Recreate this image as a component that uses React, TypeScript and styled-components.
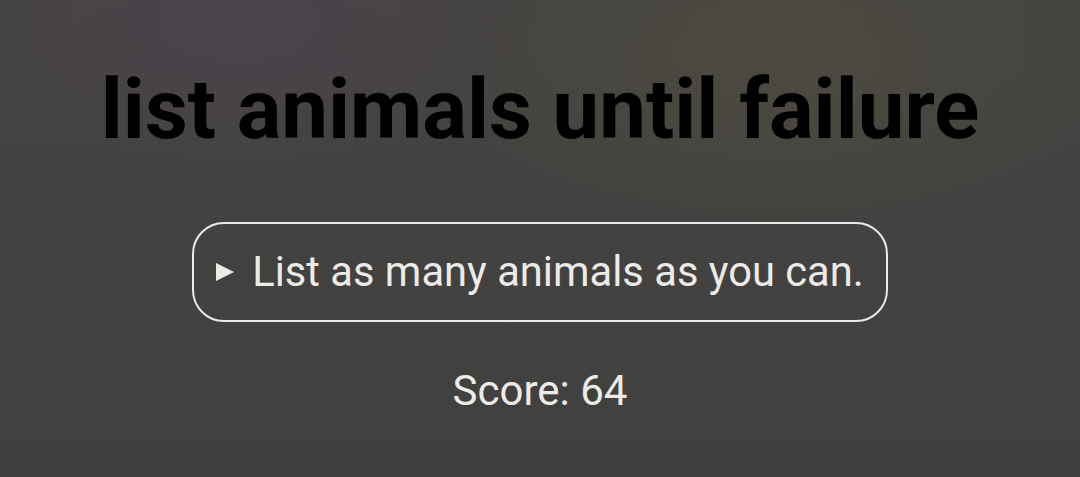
import React from "react";
import styled, { createGlobalStyle } from "styled-components";

const GlobalStyle = createGlobalStyle`
  html, body {
    margin: 0;
    padding: 0;
    height: 100%;
  }
  body {
    font-family: Roboto, "Liberation Sans", sans-serif;
    background: #424140;
  }
`;

const Page = styled.main`
  width: 100%;
  height: 477px;
  overflow: hidden;
  display: flex;
  flex-direction: column;
  align-items: center;
  background:
    radial-gradient(ellipse 40% 45% at 22% 5%, rgba(80, 66, 84, 0.55), transparent 70%),
    radial-gradient(ellipse 45% 50% at 72% 12%, rgba(82, 78, 62, 0.6), transparent 70%),
    linear-gradient(180deg, #454442 0%, #40403e 100%);
`;

const Title = styled.h1`
  margin: 64px 0 0;
  font-size: 83.4px;
  font-weight: 700;
  line-height: 1.1;
  color: #000;
`;

const Prompt = styled.button`
  margin-top: 66px;
  box-sizing: border-box;
  height: 100px;
  padding: 0 22px;
  display: flex;
  align-items: center;
  gap: 18px;
  background: transparent;
  border: 2px solid #ecebe8;
  border-radius: 32px;
  color: #ecebe8;
  font-family: inherit;
  font-size: 41.7px;
  cursor: pointer;
`;

const Arrow = styled.svg`
  width: 18px;
  height: 18px;
  flex: none;
  fill: #ecebe8;
`;

const Score = styled.p`
  margin: 44px 0 0;
  font-size: 42px;
  color: #ecebe8;
`;

export default function App() {
  return (
    <>
      <GlobalStyle />
      <Page>
        <Title>list animals until failure</Title>
        <Prompt>
          <Arrow viewBox="0 0 18 18">
            <polygon points="0,0 18,9 0,18" />
          </Arrow>
          List as many animals as you can.
        </Prompt>
        <Score>Score: 64</Score>
      </Page>
    </>
  );
}
